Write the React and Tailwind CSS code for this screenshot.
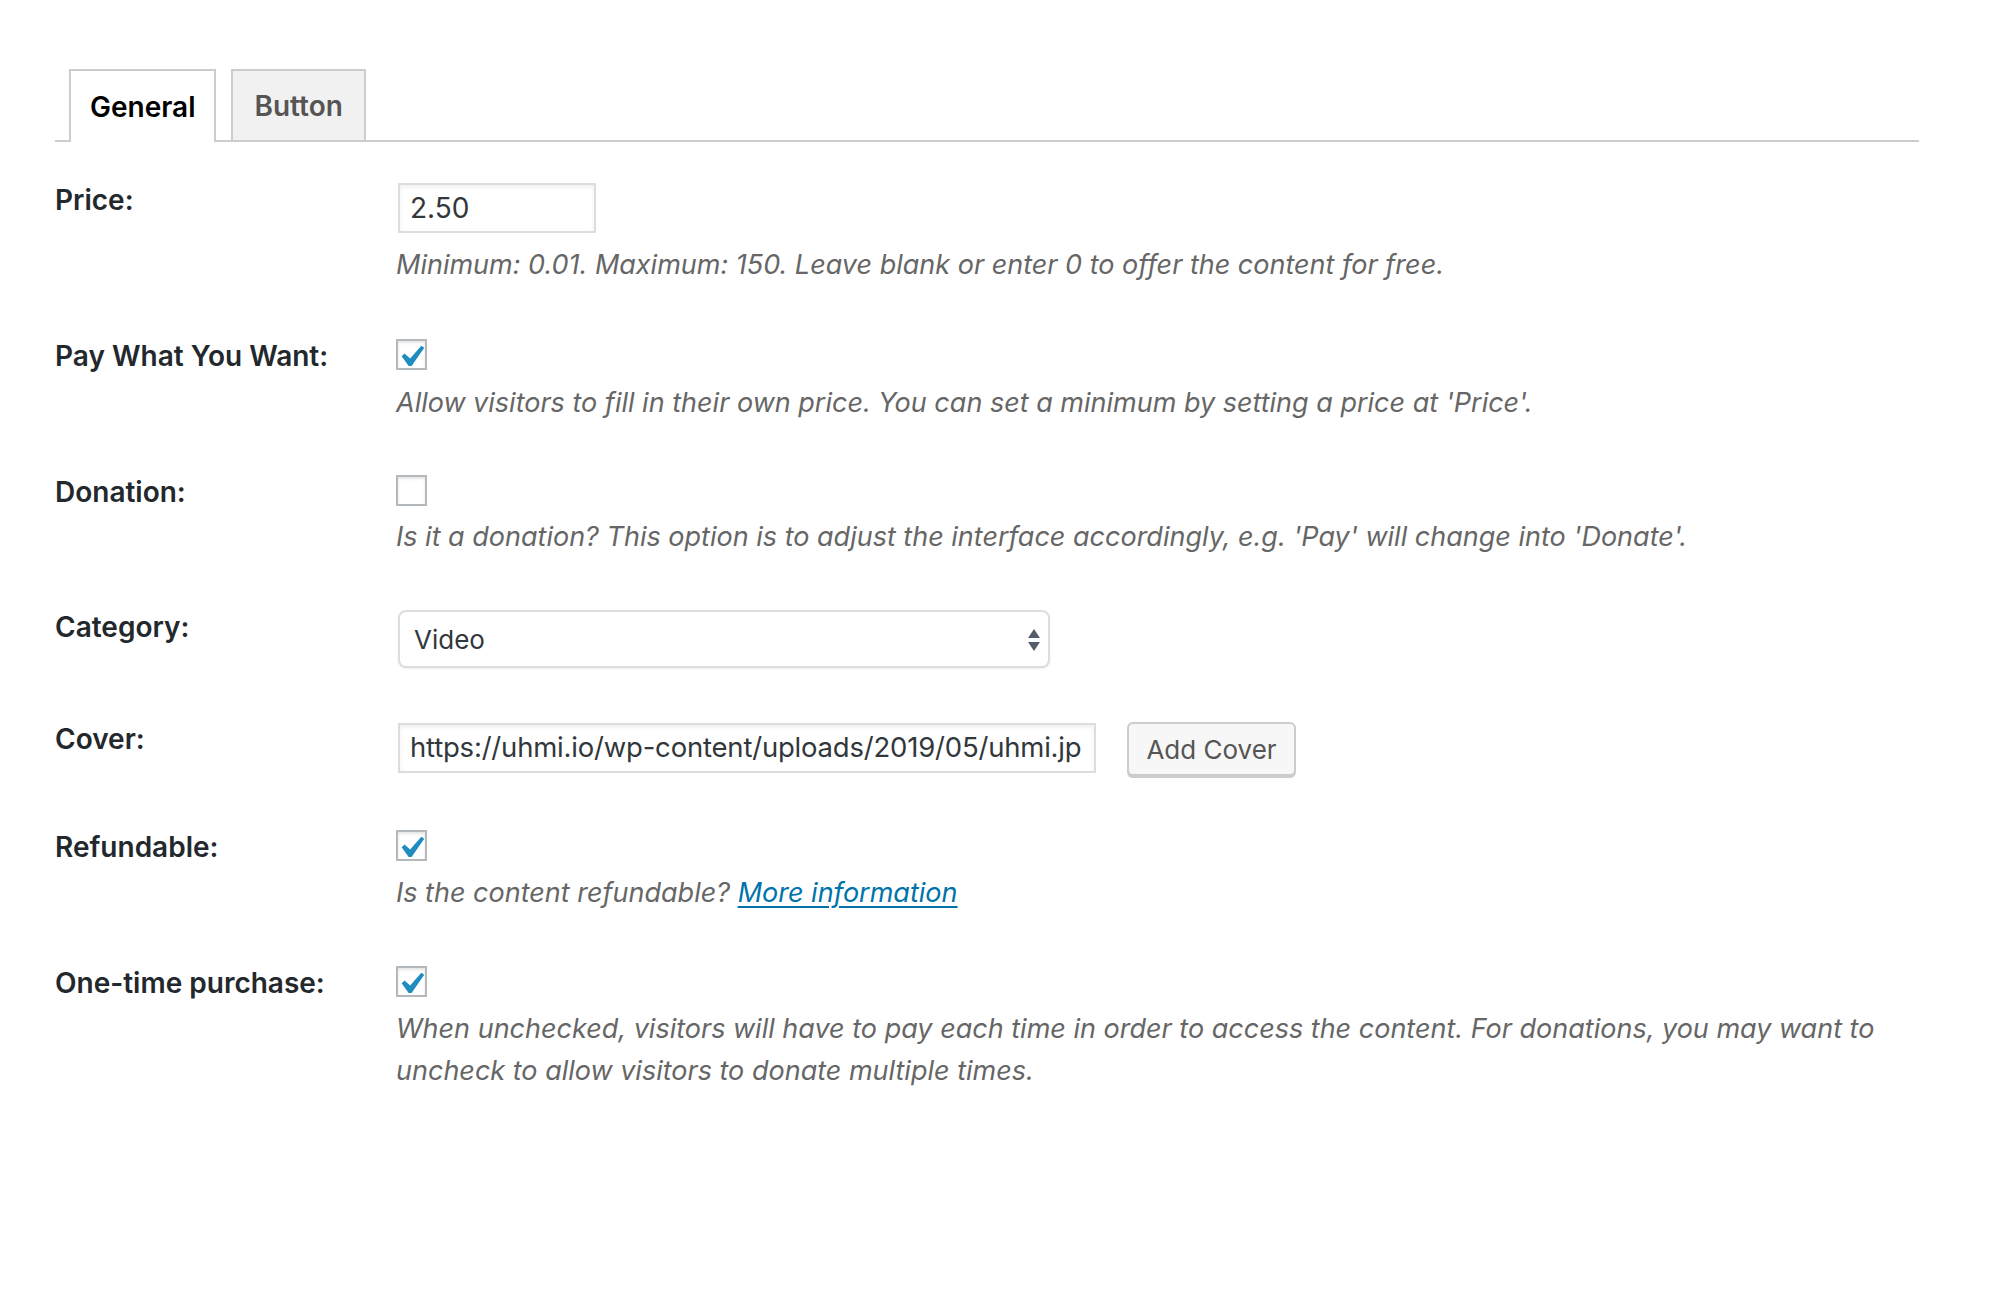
import React from "react";

const FONT = { fontFamily: 'Inter, "Noto Sans", "Liberation Sans", sans-serif' };

function Check({ checked }) {
  return (
    <div className="relative w-[31px] h-[31px] border-2 border-[#b4b9be] bg-white shadow-[inset_0_2px_3px_rgba(0,0,0,0.1)]">
      {checked && (
        <svg
          className="absolute left-[3px] top-[4px]"
          width="24"
          height="22"
          viewBox="5.5 4.6 11 10"
        >
          <path
            fill="#1e8cbe"
            d="M14.83 4.89l1.34.94-5.81 8.38H9.02L5.78 9.67l1.34-1.25 2.58 2.27z"
          />
        </svg>
      )}
    </div>
  );
}

function Row({ label, mt, children }) {
  return (
    <div className={`flex ${mt}`}>
      <div className="w-[341px] shrink-0 -mt-[1px] text-[28px] leading-[36px] font-semibold text-[#23282d]">
        {label}
      </div>
      <div className="flex-1 flex flex-col">{children}</div>
    </div>
  );
}

function Desc({ children, mt }) {
  return (
    <p className={`${mt} text-[27px] leading-[42px] italic text-[#666]`}>{children}</p>
  );
}

export default function App() {
  return (
    <div className="w-[1993px] min-h-[1308px] bg-white pt-[69px] pl-[55px]" style={FONT}>
      <div className="w-[1864px] flex items-end gap-[15px] pl-[14px] border-b-2 border-[#ccc]">
        <div className="h-[73px] -mb-[2px] px-[19px] flex items-center border-2 border-b-0 border-[#ccc] bg-white text-[28px] font-semibold text-black">
          General
        </div>
        <div className="h-[71px] px-[21px] flex items-center border-2 border-b-0 border-[#ccc] bg-[#f1f1f1] text-[28px] font-semibold text-[#555]">
          Button
        </div>
      </div>

      <div className="w-[1864px] flex flex-col">
        <Row label="Price:" mt="mt-[41px]">
          <div className="w-[198px] h-[50px] ml-[2px] border-2 border-[#ddd] bg-white shadow-[inset_0_2px_4px_rgba(0,0,0,0.07)] flex items-center px-[10px] text-[28px] text-[#32373c]">
            2.50
          </div>
          <Desc mt="mt-[11px]">
            Minimum: 0.01. Maximum: 150. Leave blank or enter 0 to offer the content for free.
          </Desc>
        </Row>

        <Row label="Pay What You Want:" mt="mt-[53px]">
          <Check checked />
          <Desc mt="mt-[12px]">
            Allow visitors to fill in their own price. You can set a minimum by setting a price at 'Price'.
          </Desc>
        </Row>

        <Row label="Donation:" mt="mt-[51px]">
          <Check checked={false} />
          <Desc mt="mt-[10px]">
            Is it a donation? This option is to adjust the interface accordingly, e.g. 'Pay' will change into 'Donate'.
          </Desc>
        </Row>

        <Row label="Category:" mt="mt-[52px]">
          <div className="relative w-[652px] h-[58px] ml-[2px] border-2 border-[#ddd] rounded-[8px] bg-white shadow-[0_1px_2px_rgba(0,0,0,0.07)] flex items-center pl-[14px] text-[26px] text-[#32373c]">
            Video
            <svg className="absolute right-[7px] top-[17px]" width="14" height="22" viewBox="0 0 14 22">
              <path d="M7 0 L13 9 L1 9 Z" fill="#555d66" />
              <path d="M1 13 L13 13 L7 22 Z" fill="#555d66" />
            </svg>
          </div>
        </Row>

        <Row label="Cover:" mt="mt-[54px]">
          <div className="flex items-start gap-[31px]">
            <div className="w-[698px] h-[50px] ml-[2px] mt-[1px] border-2 border-[#ddd] bg-white shadow-[inset_0_2px_4px_rgba(0,0,0,0.07)] flex items-center pl-[10px] overflow-hidden whitespace-nowrap text-[27.5px] tracking-[-0.2px] text-[#32373c]">
              https://uhmi.io/wp-content/uploads/2019/05/uhmi.jp
            </div>
            <div className="w-[169px] h-[54px] border-2 border-[#ccc] rounded-[6px] bg-[#f7f7f7] shadow-[0_2px_0_#ccc] flex items-center justify-center text-[26px] text-[#555]">
              Add Cover
            </div>
          </div>
        </Row>

        <Row label="Refundable:" mt="mt-[54px]">
          <Check checked />
          <Desc mt="mt-[11px]">
            Is the content refundable?{" "}
            <a className="text-[#0073aa] underline underline-offset-[4px]">More information</a>
          </Desc>
        </Row>

        <Row label="One-time purchase:" mt="mt-[52px]">
          <Check checked />
          <Desc mt="mt-[11px]">
            When unchecked, visitors will have to pay each time in order to access the content. For donations, you may want to
            <br />
            uncheck to allow visitors to donate multiple times.
          </Desc>
        </Row>
      </div>
    </div>
  );
}
